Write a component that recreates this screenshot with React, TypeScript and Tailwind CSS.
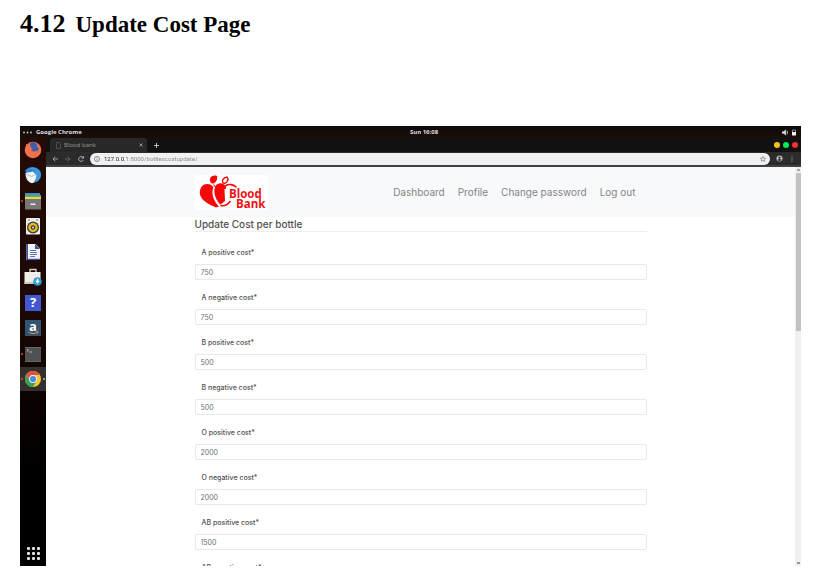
import React from "react";

const costs = [
  { label: "A positive cost*", value: "750" },
  { label: "A negative cost*", value: "750" },
  { label: "B positive cost*", value: "500" },
  { label: "B negative cost*", value: "500" },
  { label: "O positive cost*", value: "2000" },
  { label: "O negative cost*", value: "2000" },
  { label: "AB positive cost*", value: "1500" },
  { label: "AB negative cost*", value: "1500" },
];

const icon = "block size-[18px]";

const dockApps: { name: string; running?: boolean; active?: boolean; art: React.ReactNode }[] = [
  {
    name: "Firefox",
    art: (
      <svg viewBox="0 0 18 18" className={icon}>
        <circle cx="9" cy="9" r="8.3" fill="#f0714c" />
        <path d="M6 2.500C8 .8 12 .6 14 3c2 2.500 1.200 6-1 7.300-2.500 1.400-5 .4-6-1.300L5.500 6z" fill="#3e5ca8" />
        <path d="M2 3l2.500 1.700L7 4.500 6.500 6.500l2.500 1-2 1.500c1 1.800 3.500 2.300 5.500.5L13 13l-6 2-5-4z" fill="#f0714c" />
        <path d="M11 1c2 1 2.300 2.500 2.300 4.500l1.700 2c.5-3-1-5.500-4-6.500z" fill="#f58a5c" />
      </svg>
    ),
  },
  {
    name: "Thunderbird",
    art: (
      <svg viewBox="0 0 18 18" className={icon}>
        <path d="M1 5C4 0 11-.3 15 3.500c3.500 4 2.500 9-1.500 12L8 17z" fill="#2d83cf" />
        <path d="M1.500 7L9 5.500l4 4-1 6-4 1.800C4 16 1.500 13 1.500 7z" fill="#f3f5f7" />
        <path d="M2 8l5.500 2.500L12 8.500" fill="none" stroke="#b3c1d0" />
        <path d="M3 5c4-3.500 8-1 9 3 1 4-1 6-2.500 8.500 7-1 9-8.500 5-12.500C11 .6 6 .5 3 5z" fill="#3e9be0" />
      </svg>
    ),
  },
  {
    name: "Files",
    running: true,
    art: (
      <svg viewBox="0 0 18 18" className={icon}>
        <path d="M1 1h15v3H1z" fill="#4389dd" />
        <path d="M1 3h16v3H1z" fill="#5cae55" />
        <path d="M1 5h16v3H1z" fill="#f0d451" />
        <path d="M1 7h16v10.500H1z" fill="#777776" />
        <path d="M6.500 11.500h5v1.500h-5z" fill="#eee" />
      </svg>
    ),
  },
  {
    name: "Rhythmbox",
    art: (
      <svg viewBox="0 0 18 18" className={icon}>
        <rect x="2" y="1" width="14" height="16.500" rx="1" fill="#eeeeea" />
        <circle cx="9" cy="10.500" r="6" fill="#393934" />
        <circle cx="9" cy="10.500" r="4.700" fill="#e6b928" />
        <circle cx="9" cy="10.500" r="2.300" fill="#3c3d40" />
        <circle cx="9" cy="10.500" r="1" fill="#ddd" />
        <path d="M4 2.500h2v1H4zM12 2.500h2v1h-2z" fill="#777" />
      </svg>
    ),
  },
  {
    name: "LibreOffice Writer",
    art: (
      <svg viewBox="0 0 18 18" className={icon}>
        <path d="M2.500 1h9L16 5.500V17H2.500z" fill="#f0f2fb" />
        <path d="M2.500 1h1.500v16H2.500zM11 1l5 5h-5zM2.500 15.800H16V17H2.500z" fill="#3e51a4" />
        <path d="M6 7.500h6M6 9.500h7M6 11.500h7M6 13.500h5" stroke="#6873a8" />
      </svg>
    ),
  },
  {
    name: "Ubuntu Software",
    art: (
      <svg viewBox="0 0 18 18" className={icon}>
        <path d="M6 4V1.500h6V4" fill="none" stroke="#cfcfcb" strokeWidth="1.300" />
        <path d="M.5 4h16v12H.5z" fill="#eeeeea" />
        <path d="M.5 14h16v2H.5z" fill="#c8c8c5" />
        <circle cx="13.500" cy="13.500" r="4.300" fill="#2b9bd2" />
        <path d="M12.800 10.800h1.500v2h1.500l-2.300 3-2.300-3h1.600z" fill="#fff" />
      </svg>
    ),
  },
  {
    name: "Help",
    art: (
      <span className="flex size-4 items-center justify-center bg-[#4258d0] font-['Open_Sans',sans-serif] text-[13px] leading-none font-bold text-white">
        ?
      </span>
    ),
  },
  {
    name: "Amazon",
    art: (
      <span className="relative flex size-4 items-center justify-center bg-[#34536e] pb-[3px] font-['Open_Sans',sans-serif] text-[13px] leading-none font-bold text-white">
        a
        <svg viewBox="0 0 16 16" className="absolute inset-0 size-4">
          <path d="M3.500 12.200c3 1.800 6 1.800 9 .2M11 11.800l2-.1-.6 1.700" fill="none" stroke="#e69b35" strokeWidth=".9" />
        </svg>
      </span>
    ),
  },
  {
    name: "Terminal",
    running: true,
    art: (
      <svg viewBox="0 0 18 18" className={icon}>
        <path d="M1 2h16v15H1z" fill="#505152" />
        <path d="M1 2h16v1H1zM1 16h16v1H1z" fill="#656566" />
        <path d="M3 4l1.500 1.300L3 6.500M5.500 7H8" fill="none" stroke="#d5d5d5" strokeWidth=".8" />
      </svg>
    ),
  },
  {
    name: "Google Chrome",
    running: true,
    active: true,
    art: (
      <svg viewBox="0 0 18 18" className={icon}>
        <circle cx="9" cy="9" r="8" fill="#f5c82f" />
        <path d="M2.070 5A8 8 0 0 1 15.930 5H9a4 4 0 0 0-3.460 6z" fill="#de5145" />
        <path d="M2.070 5A8 8 0 0 0 9 17l3.460-6a4 4 0 0 1-6.920 0z" fill="#32a35b" />
        <circle cx="9" cy="9" r="3.900" fill="#f3f3f3" />
        <circle cx="9" cy="9" r="3.100" fill="#4a8af0" />
      </svg>
    ),
  },
];

function SystemBar() {
  return (
    <div className="grid h-3 shrink-0 grid-cols-3 items-center bg-[linear-gradient(#0b0b0b,#1c0d08)] px-[3px] font-['Open_Sans',sans-serif] text-[6px] leading-none font-bold text-[#dedede]">
      <div className="flex items-center gap-1">
        <svg viewBox="0 0 9 3" className="h-[3px] w-[9px]" fill="#ccc">
          <circle cx="1" cy="1.500" r=".9" />
          <circle cx="4.500" cy="1.500" r=".9" />
          <circle cx="8" cy="1.500" r=".9" />
        </svg>
        Google Chrome
      </div>
      <div className="pl-[27px] text-center">Sun 16:08</div>
      <div className="flex justify-end">
        <svg viewBox="0 0 16 7" className="h-[7px] w-4">
          <path d="M0 2.500h1.500L4 .7v5.600L1.500 4.500H0zM5 1.500c1 1 1 3 0 4" fill="#ddd" stroke="#999" strokeWidth=".5" />
          <path d="M10.500 3V1h3v2" fill="none" stroke="#888" />
          <path d="M10 3h4v3.500h-4z" fill="#eee" />
        </svg>
      </div>
    </div>
  );
}

function Dock() {
  return (
    <aside className="flex w-[26px] shrink-0 flex-col justify-between bg-[linear-gradient(#250b04,#1c0804_40%,#080201_65%,#000_80%)]">
      <div className="flex h-[253px] flex-col justify-between">
        {dockApps.map((app) => (
          <button
            key={app.name}
            aria-label={app.name}
            className={"relative flex h-6 w-full items-center justify-center " + (app.active ? "bg-[#353030]" : "")}
          >
            {app.art}
            {app.running && <span className="absolute left-px size-[2px] rounded-full bg-[#e24a1e]" />}
            {app.active && <span className="absolute right-px size-[2px] rounded-full bg-[#bbb]" />}
          </button>
        ))}
      </div>
      <button aria-label="Show applications" className="mx-auto mb-[6px]">
        <svg viewBox="0 0 13 13" className="block size-[13px]" fill="#e2e2e2">
          {[0, 5, 10].map((y) => [0, 5, 10].map((x) => <rect key={x + "-" + y} x={x} y={y} width="3" height="3" rx="1" />))}
        </svg>
      </button>
    </aside>
  );
}

function TabStrip() {
  return (
    <div className="flex h-[14px] shrink-0 items-end justify-between bg-[#111] pl-1 font-['Noto_Sans',sans-serif] text-[6px] leading-none">
      <div className="flex h-full items-center">
        <div className="flex h-full w-[97px] items-center rounded-t-[3px] bg-[#282828] pr-1 pl-[6px] text-[#929292]">
          <svg viewBox="0 0 5 7" className="mr-[3px] h-[7px] w-[5px]" fill="none" stroke="#555" strokeWidth=".8">
            <path d="M.5.5H3l1.500 1.500v4.500h-4z" />
          </svg>
          <span className="grow">Blood bank</span>
          <button aria-label="Close tab">
            <svg viewBox="0 0 4 4" className="block size-1" stroke="#aaa" strokeWidth=".8">
              <path d="M.5.5l3 3M3.500.5l-3 3" />
            </svg>
          </button>
        </div>
        <button aria-label="New tab" className="ml-[7px]">
          <svg viewBox="0 0 5 5" className="block size-[5px]" stroke="#d0d0d0" strokeWidth=".9">
            <path d="M2.500 0v5M0 2.500h5" />
          </svg>
        </button>
      </div>
      <div className="flex h-full items-center gap-[3px] pr-[3px]">
        <button aria-label="Minimize" className="size-[6px] rounded-full bg-[#f9c513]" />
        <button aria-label="Maximize" className="size-[6px] rounded-full bg-[#05ed4e]" />
        <button aria-label="Close" className="size-[6px] rounded-full bg-[#f1312c]" />
      </div>
    </div>
  );
}

function Toolbar() {
  return (
    <div className="flex h-[15px] shrink-0 items-center border-b-2 border-[#414144] bg-[#2b2b2c] pr-2 pl-[6px]">
      <div className="flex gap-[7px]">
        <button aria-label="Back">
          <svg viewBox="0 0 6 6" className="block size-[6px]" fill="none" stroke="#b5b5b5" strokeWidth=".8">
            <path d="M6 3H1M3.300.7L1 3l2.300 2.300" />
          </svg>
        </button>
        <button aria-label="Forward">
          <svg viewBox="0 0 6 6" className="block size-[6px]" fill="none" stroke="#707070" strokeWidth=".8">
            <path d="M0 3h5M2.700.7L5 3 2.700 5.300" />
          </svg>
        </button>
        <button aria-label="Reload">
          <svg viewBox="0 0 6 6" className="block size-[6px]" fill="none" stroke="#bbb" strokeWidth=".9">
            <path d="M5.300 4A2.400 2.400 0 1 1 4.800 1.300M5.500.2v2h-2" />
          </svg>
        </button>
      </div>
      <div className="ml-[6px] flex h-3 grow items-center rounded-full bg-[#f0f1f5] pr-1 pl-1">
        <svg viewBox="0 0 7 7" className="mr-1 size-[6px]" fill="none" stroke="#666" strokeWidth=".8">
          <circle cx="3.500" cy="3.500" r="3" />
          <path d="M3.500 3v2.200M3.500 1.600v.8" />
        </svg>
        <input
          aria-label="Address"
          defaultValue="127.0.0.1:8000/bottlescostupdate/"
          className="h-3 min-w-0 grow bg-[linear-gradient(90deg,#222_23px,#858585_23px)] bg-clip-text font-['Roboto',sans-serif] text-[6px] leading-none text-transparent outline-none"
        />
        <button aria-label="Bookmark">
          <svg viewBox="0 0 7 7" className="block size-[6px]" fill="none" stroke="#666" strokeWidth=".7">
            <path d="M3.500.5l.9 2 2.100.2-1.600 1.400.5 2.100-1.900-1.100-1.900 1.100.5-2.100L.5 2.700l2.100-.2z" />
          </svg>
        </button>
      </div>
      <button aria-label="Account" className="ml-[6px]">
        <svg viewBox="0 0 8 8" className="block size-[7px]">
          <circle cx="4" cy="4" r="3.500" fill="#bbb" />
          <circle cx="4" cy="3" r="1.300" fill="#333" />
          <path d="M1.500 5.600c1.500-1.300 3.500-1.300 5 0-1.500 1.500-3.500 1.500-5 0z" fill="#333" />
        </svg>
      </button>
      <button aria-label="Menu" className="ml-2">
        <svg viewBox="0 0 2 6" className="block h-[6px] w-[2px]" fill="#aaa">
          <circle cx="1" cy=".8" r=".6" />
          <circle cx="1" cy="3" r=".6" />
          <circle cx="1" cy="5.200" r=".6" />
        </svg>
      </button>
    </div>
  );
}

function Logo() {
  return (
    <svg viewBox="0 0 73 35" role="img" aria-label="Blood Bank" className="h-[35px] w-[73px] bg-white">
      <g fill="#f70808">
        <path d="M18.500 12c-3-4-10-4.200-12.500.5-3 6 0 11 4 14 4 3 7 4 11 6l3-1c-5-5-8-12-5.500-19.500z" />
        <path d="M20 11.500c3-4.500 8-4 10.500-.5.800 1.200.5 2 .5 3h-1.500l.5 12c-1 1-3 2.500-5 3.500-4-5-7-11-5-18z" />
        <path d="M15 3.500c1-2.500 4-3.500 7-2.500 1 3-1 7-4 7.500-2 0-3.500-2-3-5z" />
        <path d="M17.500 8l2 4 .8-1z" />
      </g>
      <path d="M19 12c-2.500 7 .5 13 5.500 18.500" fill="none" stroke="#fff" strokeWidth=".9" />
      <g fill="none" stroke="#f70808" strokeLinecap="round">
        <path d="M28 8c-1.500-2 0-5.500 4-6 2 2 .5 6-2.500 6.500z" strokeWidth="1.400" />
        <path d="M30.500 10.800c3-2 8-1.500 10.500 1.200M26 30.500c4 1 7.500-2 9-4" strokeWidth="1.600" />
      </g>
      <g fill="#ef1111" fontFamily="Open Sans, sans-serif" fontSize="11.500" fontWeight="700">
        <text x="34" y="23">
          Blood
        </text>
        <text x="41" y="33">
          Bank
        </text>
      </g>
    </svg>
  );
}

function SiteHeader() {
  return (
    <header className="bg-[#f8f9fb]">
      <div className="mx-auto flex h-[50px] max-w-[452px] items-center justify-between pr-[11px]">
        <Logo />
        <nav className="flex gap-[13px] text-[10px] leading-none text-[#858585]">
          <a href="#dashboard">Dashboard</a>
          <a href="#profile">Profile</a>
          <a href="#password">Change password</a>
          <a href="#logout">Log out</a>
        </nav>
      </div>
    </header>
  );
}

function CostForm() {
  return (
    <form className="mx-auto max-w-[452px]">
      <h2 className="h-[15px] border-b border-[#eeeeef] text-[10px] leading-[14px] font-medium text-[#505050]">
        Update Cost per bottle
      </h2>
      <div className="pt-4">
        {costs.map((cost) => {
          const id = cost.label.replace(/\W/g, "-");
          return (
            <div key={id} className="h-[45px]">
              <label htmlFor={id} className="block pl-[7px] text-[7px] leading-[10px] font-medium text-[#505050]">
                {cost.label}
              </label>
              <input
                id={id}
                defaultValue={cost.value}
                className="mt-[6px] block h-4 w-full rounded-[2px] border border-[#e8e9ed] bg-white px-[5px] text-[7px] text-[#6a7076] outline-none"
              />
            </div>
          );
        })}
      </div>
    </form>
  );
}

function Scrollbar() {
  return (
    <div aria-hidden="true" className="flex w-[6px] shrink-0 flex-col items-center justify-between bg-[#f0f0f0] pb-[2px]">
      <div className="flex flex-col items-center gap-[2px] pt-[2px]">
        <span className="h-[2px] w-[3px] bg-[#a8a8a8]" />
        <span className="h-[158px] w-[5px] bg-[#c2c2c2]" />
      </div>
      <span className="h-[2px] w-[3px] bg-[#9a9a9a]" />
    </div>
  );
}

export default function App() {
  return (
    <main className="min-h-screen bg-white pr-[14px] pl-5">
      <h1 className="flex h-[126px] items-baseline gap-[10px] pt-[9px] font-['Liberation_Serif',serif] text-[26px] leading-[30px] font-bold text-black">
        4.12 <span className="text-[23px]">Update Cost Page</span>
      </h1>
      <section className="flex h-[calc(100vh-144px)] flex-col overflow-hidden">
        <SystemBar />
        <div className="flex min-h-0 grow">
          <Dock />
          <div className="flex min-w-0 grow flex-col">
            <TabStrip />
            <Toolbar />
            <div className="flex min-h-0 grow font-['Inter',sans-serif]">
              <div className="grow overflow-hidden">
                <SiteHeader />
                <CostForm />
              </div>
              <Scrollbar />
            </div>
          </div>
        </div>
      </section>
    </main>
  );
}
